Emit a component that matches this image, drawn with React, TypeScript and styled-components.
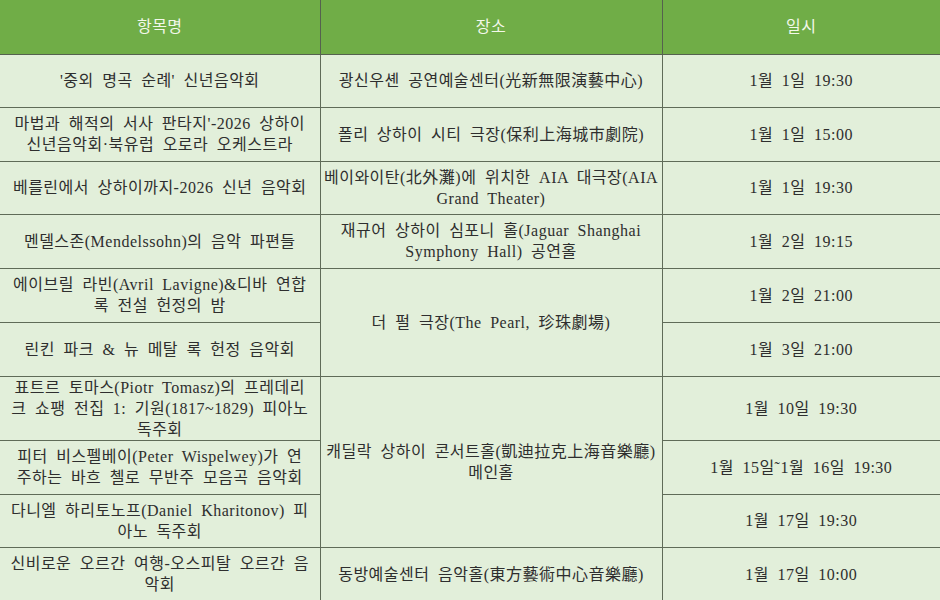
import React from "react";
import styled, { createGlobalStyle } from "styled-components";

type Row = {
  name: string[];
  place?: { lines: string[]; span: number };
  date: string;
  height: number;
};

const rows: Row[] = [
  {
    name: ["'중외 명곡 순례' 신년음악회"],
    place: { lines: ["광신우셴 공연예술센터(光新無限演藝中心)"], span: 1 },
    date: "1월 1일 19:30",
    height: 53,
  },
  {
    name: ["마법과 해적의 서사 판타지'-2026 상하이", "신년음악회·북유럽 오로라 오케스트라"],
    place: { lines: ["폴리 상하이 시티 극장(保利上海城市劇院)"], span: 1 },
    date: "1월 1일 15:00",
    height: 54,
  },
  {
    name: ["베를린에서 상하이까지-2026 신년 음악회"],
    place: { lines: ["베이와이탄(北外灘)에 위치한 AIA 대극장(AIA", "Grand Theater)"], span: 1 },
    date: "1월 1일 19:30",
    height: 53,
  },
  {
    name: ["멘델스존(Mendelssohn)의 음악 파편들"],
    place: { lines: ["재규어 상하이 심포니 홀(Jaguar Shanghai", "Symphony Hall) 공연홀"], span: 1 },
    date: "1월 2일 19:15",
    height: 54,
  },
  {
    name: ["에이브릴 라빈(Avril Lavigne)&디바 연합", "록 전설 헌정의 밤"],
    place: { lines: ["더 펄 극장(The Pearl, 珍珠劇場)"], span: 2 },
    date: "1월 2일 21:00",
    height: 54,
  },
  {
    name: ["린킨 파크 & 뉴 메탈 록 헌정 음악회"],
    date: "1월 3일 21:00",
    height: 54,
  },
  {
    name: [
      "표트르 토마스(Piotr Tomasz)의 프레데리",
      "크 쇼팽 전집 1: 기원(1817~1829) 피아노",
      "독주회",
    ],
    place: { lines: ["캐딜락 상하이 콘서트홀(凱迪拉克上海音樂廳)", "메인홀"], span: 3 },
    date: "1월 10일 19:30",
    height: 63,
  },
  {
    name: ["피터 비스펠베이(Peter Wispelwey)가 연", "주하는 바흐 첼로 무반주 모음곡 음악회"],
    date: "1월 15일˜1월 16일 19:30",
    height: 54,
  },
  {
    name: ["다니엘 하리토노프(Daniel Kharitonov) 피", "아노 독주회"],
    date: "1월 17일 19:30",
    height: 53,
  },
  {
    name: ["신비로운 오르간 여행-오스피탈 오르간 음", "악회"],
    place: { lines: ["동방예술센터 음악홀(東方藝術中心音樂廳)"], span: 1 },
    date: "1월 17일 10:00",
    height: 54,
  },
];

const GlobalStyle = createGlobalStyle`
  html, body {
    margin: 0;
    padding: 0;
    background: #e2efda;
  }
`;

const Table = styled.table`
  width: 940px;
  border-collapse: collapse;
  table-layout: fixed;
  font-family: "Liberation Serif", "Noto Sans CJK KR", serif;
  font-size: 16px;
  line-height: 21px;
  word-spacing: 4px;
  letter-spacing: 0.5px;
`;

const Col = styled.col<{ $w: number }>`
  width: ${(p) => p.$w}px;
`;

const HeadRow = styled.tr`
  height: 54px;
`;

const BodyRow = styled.tr<{ $h: number }>`
  height: ${(p) => p.$h}px;
`;

const HeadCell = styled.th<{ $last?: boolean }>`
  padding: 0;
  background: #70ad47;
  color: #f3f8ea;
  font-weight: normal;
  text-align: center;
  vertical-align: middle;
  border-bottom: 1px solid #55614f;
  border-right: ${(p) => (p.$last ? "none" : "1px solid #55614f")};
`;

const Cell = styled.td<{ $last?: boolean }>`
  padding: 0;
  background: #e2efda;
  color: #2e2e2e;
  text-align: center;
  vertical-align: middle;
  white-space: nowrap;
  border-bottom: 1px solid #5f6b58;
  border-right: ${(p) => (p.$last ? "none" : "1px solid #5f6b58")};
`;

const Lines = ({ lines }: { lines: string[] }) => (
  <>
    {lines.map((l, i) => (
      <React.Fragment key={i}>
        {i > 0 && <br />}
        {l}
      </React.Fragment>
    ))}
  </>
);

export default function App() {
  return (
    <>
      <GlobalStyle />
      <Table>
        <colgroup>
          <Col $w={320} />
          <Col $w={342} />
          <Col $w={278} />
        </colgroup>
        <thead>
          <HeadRow>
            <HeadCell>항목명</HeadCell>
            <HeadCell>장소</HeadCell>
            <HeadCell $last>일시</HeadCell>
          </HeadRow>
        </thead>
        <tbody>
          {rows.map((r, i) => (
            <BodyRow key={i} $h={r.height}>
              <Cell>
                <Lines lines={r.name} />
              </Cell>
              {r.place && (
                <Cell rowSpan={r.place.span}>
                  <Lines lines={r.place.lines} />
                </Cell>
              )}
              <Cell $last>{r.date}</Cell>
            </BodyRow>
          ))}
        </tbody>
      </Table>
    </>
  );
}
